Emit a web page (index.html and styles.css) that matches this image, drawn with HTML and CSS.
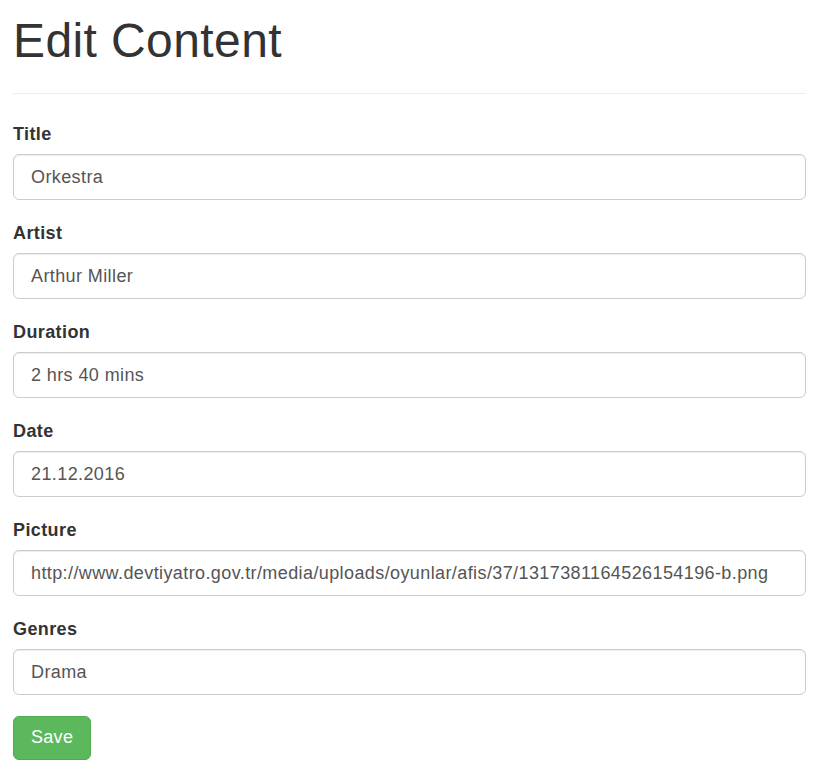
FILE: index.html
```html
<!DOCTYPE html>
<html>
<head>
<meta charset="utf-8">
<link rel="stylesheet" href="styles.css">
</head>
<body>
<div class="page">
  <div class="page-header">
    <h1>Edit Content</h1>
  </div>
  <form class="form">
    <div class="form-group">
      <label class="label">Title</label>
      <input class="input" type="text" value="Orkestra">
    </div>
    <div class="form-group">
      <label class="label">Artist</label>
      <input class="input" type="text" value="Arthur Miller">
    </div>
    <div class="form-group">
      <label class="label">Duration</label>
      <input class="input" type="text" value="2 hrs 40 mins">
    </div>
    <div class="form-group">
      <label class="label">Date</label>
      <input class="input" type="text" value="21.12.2016">
    </div>
    <div class="form-group">
      <label class="label">Picture</label>
      <input class="input" type="text" value="http://www.devtiyatro.gov.tr/media/uploads/oyunlar/afis/37/1317381164526154196-b.png">
    </div>
    <div class="form-group last">
      <label class="label">Genres</label>
      <input class="input" type="text" value="Drama">
    </div>
    <button class="btn-save" type="button">Save</button>
  </form>
</div>
</body>
</html>
```
FILE: styles.css
```css
* { box-sizing: border-box; }
html, body {
  margin: 0;
  padding: 0;
  background: #fff;
}
body {
  font-family: "Liberation Sans", Arial, Helvetica, sans-serif;
  font-size: 18px;
  line-height: 1.42857;
  color: #333;
}
.page {
  padding: 15px 9px 0 13px;
}
.page-header {
  border-bottom: 1px solid #eee;
  padding-bottom: 25px;
}
.page-header h1 {
  margin: 0;
  font-size: 48px;
  font-weight: 400;
  line-height: 1.1;
  letter-spacing: 0.4px;
  color: #333;
}
.form {
  padding-top: 27px;
}
.form-group {
  margin-bottom: 20px;
}
.form-group.last {
  margin-bottom: 21px;
}
.label {
  display: block;
  font-weight: 700;
  line-height: 26px;
  margin-bottom: 7px;
  letter-spacing: 0.4px;
}
.input {
  display: block;
  width: 100%;
  height: 46px;
  padding: 11px 16px 9px 17px;
  font-family: inherit;
  font-size: 18px;
  line-height: 1.3333;
  letter-spacing: 0.4px;
  color: #555;
  background: #fff;
  border: 1px solid #ccc;
  border-radius: 6px;
  box-shadow: inset 0 1px 1px rgba(0,0,0,.075);
  outline: none;
}
.btn-save {
  display: inline-block;
  height: 44px;
  padding: 0 17px;
  font-family: inherit;
  font-size: 18px;
  letter-spacing: 0.3px;
  color: #fff;
  background: #5cb85c;
  border: 1px solid #4cae4c;
  border-radius: 6px;
  cursor: pointer;
}
```
